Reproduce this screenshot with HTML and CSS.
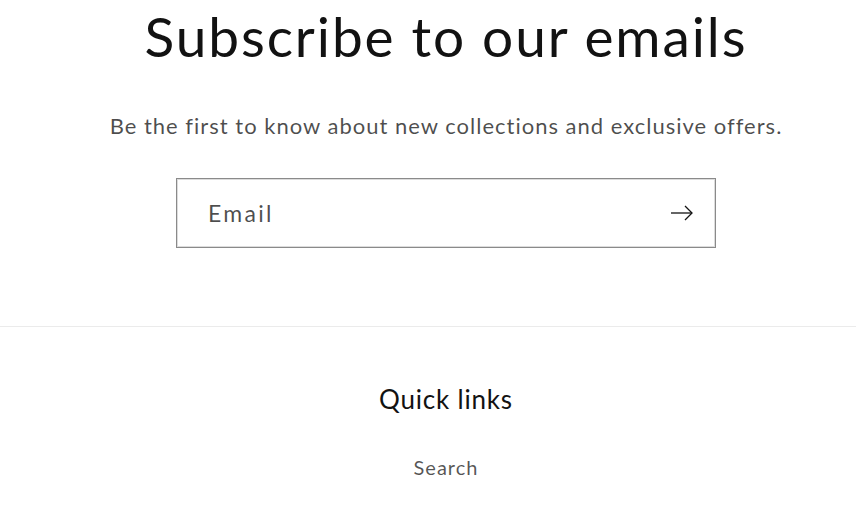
FILE: index.html
```html
<!DOCTYPE html>
<html lang="en">
<head>
<meta charset="utf-8">
<link rel="stylesheet" href="styles.css">
</head>
<body>
<section class="newsletter">
  <h2 class="newsletter-title">Subscribe to our emails</h2>
  <p class="newsletter-text">Be the first to know about new collections and exclusive offers.</p>
  <form class="newsletter-form">
    <div class="field">
      <span class="field-label">Email</span>
      <button class="field-button" type="button" aria-label="Subscribe">
        <svg width="22" height="16" viewBox="0 0 22 16" fill="none" stroke="#121212" stroke-width="1.3">
          <path d="M0 8 H21"/>
          <path d="M14 1 L21 8 L14 15"/>
        </svg>
      </button>
    </div>
  </form>
</section>
<footer class="footer">
  <h3 class="footer-heading">Quick links</h3>
  <ul class="footer-list">
    <li><a class="footer-link" href="#">Search</a></li>
  </ul>
</footer>
</body>
</html>
```
FILE: styles.css
```css
* { box-sizing: border-box; }
html, body { margin: 0; padding: 0; background: #fff; }
body {
  font-family: Lato, "Open Sans", sans-serif;
  color: #121212;
  width: 856px;
  height: 520px;
  overflow: hidden;
}
.newsletter {
  padding-left: 36px;
  display: flex;
  flex-direction: column;
  align-items: center;
}
.newsletter-title {
  margin: 0;
  font-weight: 400;
  font-size: 55px;
  line-height: 76px;
  letter-spacing: 1.9px;
  margin-top: -2px;
  color: #121212;
}
.newsletter-text {
  margin: 37px 0 0;
  font-size: 22px;
  line-height: 30px;
  letter-spacing: 1px;
  color: rgba(18,18,18,0.75);
}
.newsletter-form { margin-top: 37px; }
.field {
  width: 540px;
  height: 70px;
  border: 1px solid #8a8a8a;
  box-shadow: 0 0 0 1px #dcdcdc inset;
  display: flex;
  align-items: center;
  padding-left: 31px;
  padding-right: 22px;
}
.field-label {
  flex: 1;
  font-size: 23px;
  letter-spacing: 2.3px;
  color: rgba(18,18,18,0.75);
}
.field-button {
  border: 0;
  background: none;
  padding: 0;
  display: flex;
}
.footer {
  margin-top: 78px;
  border-top: 1px solid #ebebeb;
  padding-left: 36px;
  display: flex;
  flex-direction: column;
  align-items: center;
}
.footer-heading {
  margin: 52px 0 0;
  font-weight: 400;
  font-size: 26px;
  line-height: 40px;
  letter-spacing: 0.8px;
}
.footer-list { list-style: none; margin: 36px 0 0; padding: 0; }
.footer-link {
  font-size: 20px;
  letter-spacing: 1px;
  color: rgba(18,18,18,0.72);
  text-decoration: none;
}
```
